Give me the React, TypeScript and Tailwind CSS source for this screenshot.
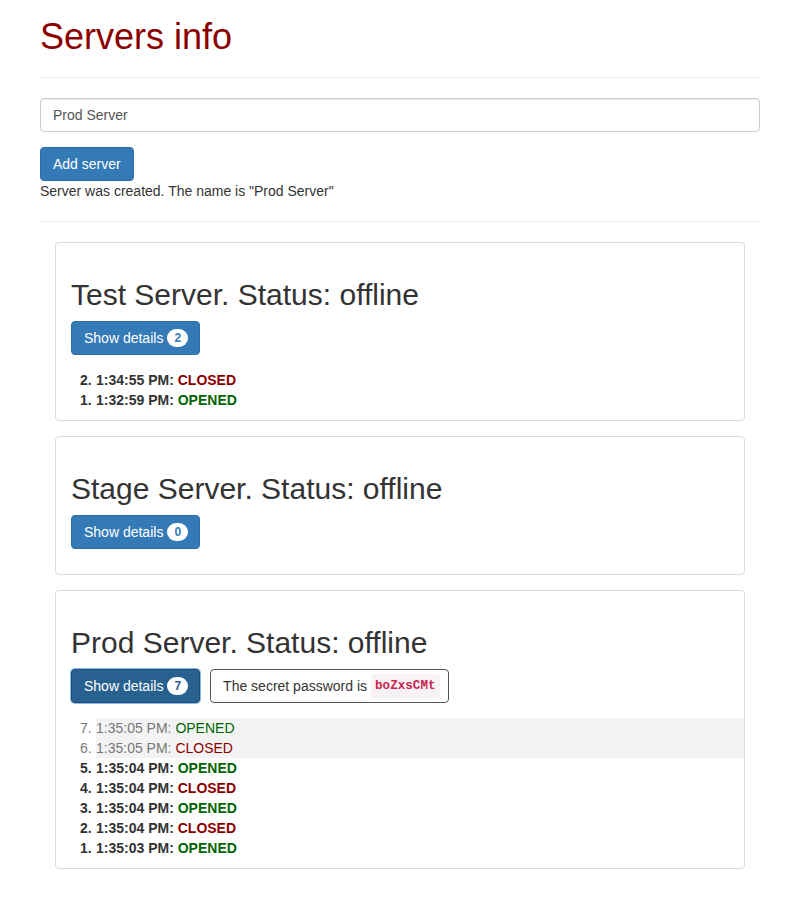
import { useState } from 'react';

type Entry = { n: number; time: string; state: 'OPENED' | 'CLOSED'; fresh?: boolean };

type Server = { name: string; status: string; log: Entry[]; active?: boolean; password?: string };

const servers: Server[] = [
  {
    name: 'Test Server',
    status: 'offline',
    log: [
      { n: 2, time: '1:34:55 PM', state: 'CLOSED' },
      { n: 1, time: '1:32:59 PM', state: 'OPENED' },
    ],
  },
  { name: 'Stage Server', status: 'offline', log: [] },
  {
    name: 'Prod Server',
    status: 'offline',
    active: true,
    password: 'boZxsCMt',
    log: [
      { n: 7, time: '1:35:05 PM', state: 'OPENED', fresh: true },
      { n: 6, time: '1:35:05 PM', state: 'CLOSED', fresh: true },
      { n: 5, time: '1:35:04 PM', state: 'OPENED' },
      { n: 4, time: '1:35:04 PM', state: 'CLOSED' },
      { n: 3, time: '1:35:04 PM', state: 'OPENED' },
      { n: 2, time: '1:35:04 PM', state: 'CLOSED' },
      { n: 1, time: '1:35:03 PM', state: 'OPENED' },
    ],
  },
];

function ServerCard({ server }: { server: Server }) {
  return (
    <div className="rounded-[4px] border border-[#dcdcdc] pb-[10px] pl-[15px] pt-[15px]">
      <h2 className="mb-[10px] mt-[20px] text-[30px] leading-[33px] font-normal text-[#333]">
        {server.name}. Status: {server.status}
      </h2>
      <div className="flex items-center">
        <button
          className={`flex h-[34px] items-center rounded-[4px] border pl-[12px] pr-[11px] text-[14px] text-white ${
            server.active
              ? 'border-[#204d74] bg-[#286090] shadow-[0_0_0_1px_#8dbbe9]'
              : 'border-[#2e6da4] bg-[#337ab7]'
          }`}
        >
          Show details
          <span
            className={`ml-[4px] inline-block min-w-[10px] rounded-[10px] bg-white px-[7px] py-[3px] text-[12px] leading-[12px] font-bold ${
              server.active ? 'text-[#286090]' : 'text-[#337ab7]'
            }`}
          >
            {server.log.length}
          </span>
        </button>
        {server.password && (
          <div className="ml-[10px] flex h-[34px] items-center rounded-[4px] border border-[#555] pl-[12px] pr-[8px] text-[14px] text-[#333]">
            The secret password is
            <code className="ml-[4px] rounded-[4px] bg-[#f9f2f4] px-[4px] py-[2px] font-['Liberation_Mono',monospace] text-[12.6px] font-bold text-[#c7254e]">
              {server.password}
            </code>
          </div>
        )}
      </div>
      <ol className="mt-[15px] list-none">
        {server.log.map((e) => (
          <li
            key={e.n}
            className={`relative pl-[25px] text-[14px] leading-[20px] ${
              e.fresh ? 'font-normal text-[#777]' : 'font-bold text-[#333]'
            }`}
          >
            <span className="absolute left-[9px] top-0">{e.n}.</span>
            <div className={e.fresh ? 'bg-[#f3f3f3]' : ''}>
              {e.time}:{' '}
              <span className={e.state === 'OPENED' ? 'text-[#006400]' : 'text-[#8b0000]'}>{e.state}</span>
            </div>
          </li>
        ))}
      </ol>
    </div>
  );
}

export default function App() {
  const [name, setName] = useState('Prod Server');

  return (
    <div className="min-h-screen bg-white font-['Liberation_Sans',Arial,sans-serif] text-[14px] leading-[20px] text-[#333]">
      <div className="ml-[40px] w-[720px] pb-[20px]">
        <h1 className="mb-[20px] pt-[17px] text-[36px] leading-[39.6px] font-normal text-[#8b0000]">Servers info</h1>
        <hr className="border-[#eee]" />
        <input
          value={name}
          onChange={(e) => setName(e.target.value)}
          className="mt-[20px] block h-[34px] w-full rounded-[4px] border border-[#ccc] px-[12px] text-[14px] text-[#555] shadow-[inset_0_1px_1px_rgba(0,0,0,0.075)] outline-none"
        />
        <button className="mt-[15px] h-[34px] rounded-[4px] border border-[#2e6da4] bg-[#337ab7] px-[12px] text-[14px] text-white">
          Add server
        </button>
        <p>Server was created. The name is "Prod Server"</p>
        <hr className="mt-[20px] border-[#eee]" />
        <div className="mx-[15px] mt-[20px] flex flex-col gap-[15px]">
          {servers.map((s) => (
            <ServerCard key={s.name} server={s} />
          ))}
        </div>
      </div>
    </div>
  );
}
